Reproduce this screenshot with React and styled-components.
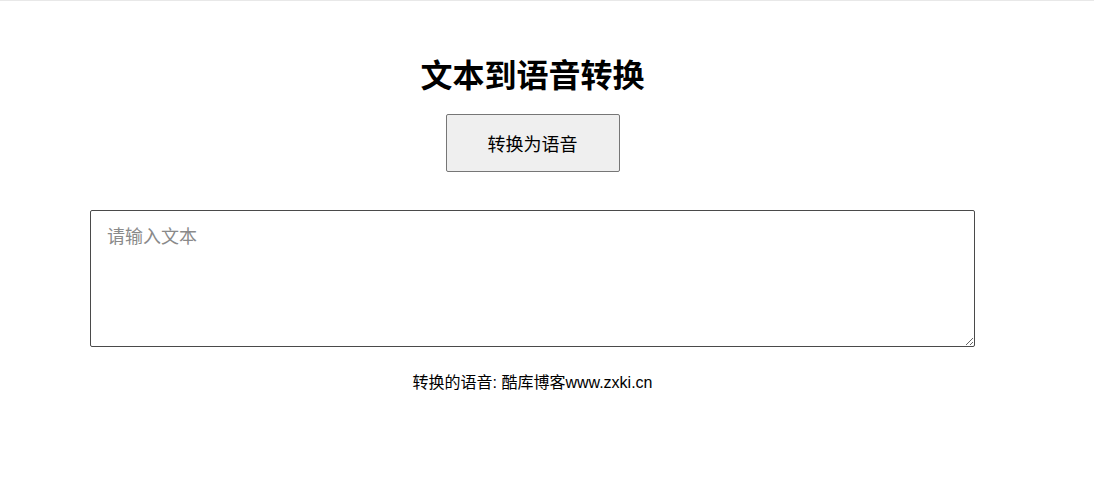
import React, { useState } from "react";
import styled, { createGlobalStyle } from "styled-components";

const GlobalStyle = createGlobalStyle`
  body {
    margin: 0;
    background: #ffffff;
    font-family: "Liberation Sans", Arial, "Noto Sans CJK SC", sans-serif;
    color: #000;
  }
`;

const Frame = styled.div`
  border-top: 1px solid #e8e8e8;
`;

const Page = styled.div`
  width: 1065px;
  display: flex;
  flex-direction: column;
  align-items: center;
  padding-top: 54px;
`;

const Title = styled.h1`
  margin: 0;
  font-size: 32px;
  line-height: 37px;
  font-weight: bold;
  font-family: "Noto Sans CJK SC", sans-serif;
`;

const ConvertButton = styled.button`
  margin-top: 22px;
  width: 174px;
  height: 58px;
  background: #efefef;
  border: 1px solid #767676;
  border-radius: 2px;
  font-size: 18px;
  font-family: "Noto Sans CJK SC", sans-serif;
  color: #000;
  cursor: pointer;

  &:hover {
    background: #e5e5e5;
  }
`;

const TextInput = styled.textarea`
  box-sizing: border-box;
  margin-top: 38px;
  width: 885px;
  height: 137px;
  padding: 12px 16px;
  border: 1px solid #4a4a4a;
  border-radius: 2px;
  font-size: 18px;
  line-height: 24px;
  font-family: "Noto Sans CJK SC", sans-serif;
  color: #000;
  resize: both;

  &::placeholder {
    color: #8a8a8a;
  }
`;

const Result = styled.p`
  margin: 26px 0 0;
  font-size: 16px;
  line-height: 20px;
`;

export default function App() {
  const [text, setText] = useState("");
  const [spoken, setSpoken] = useState("酷库博客www.zxki.cn");

  const speak = () => {
    if (text !== "") setSpoken(text);
  };

  return (
    <>
      <GlobalStyle />
      <Frame>
        <Page>
          <Title>文本到语音转换</Title>
          <ConvertButton onClick={speak}>转换为语音</ConvertButton>
          <TextInput
            placeholder="请输入文本"
            value={text}
            onChange={(e) => setText(e.target.value)}
          />
          <Result>转换的语音: {spoken}</Result>
        </Page>
      </Frame>
    </>
  );
}
